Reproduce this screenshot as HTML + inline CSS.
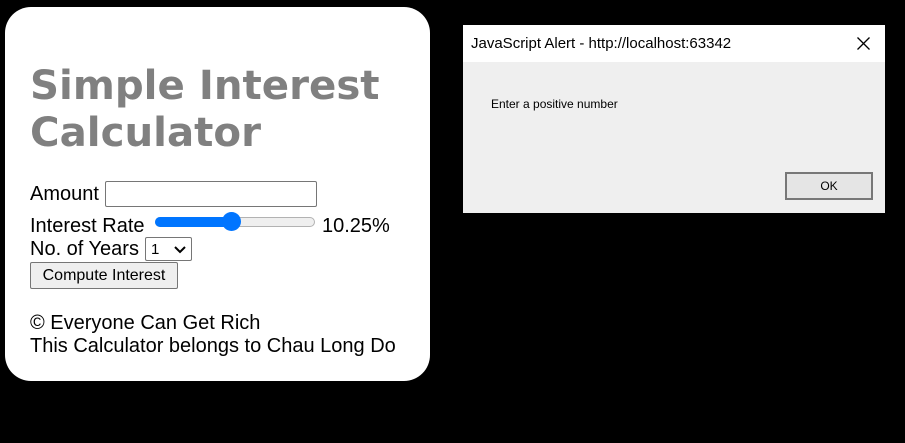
<!DOCTYPE html>
<html><head><style>
body{margin:0;width:905px;height:443px;background:#000;position:relative;overflow:hidden;font-family:"Liberation Sans",Arial,sans-serif;}
.card{position:absolute;left:5px;top:7px;width:425px;height:374px;background:#fff;border-radius:26px;}
.a{position:absolute;white-space:nowrap;}
h1{position:absolute;left:25px;top:55px;margin:0;font-family:"DejaVu Sans",Verdana,sans-serif;font-size:40.3px;line-height:47px;color:#808080;font-weight:bold;white-space:nowrap;}
.t{font-size:20px;color:#000;}
.dlg{position:absolute;left:463px;top:25px;width:422px;height:188px;background:#efefef;}
.tb{position:absolute;left:0;top:0;width:422px;height:37px;background:#fff;}
</style></head><body>
<div class="card">
<h1>Simple Interest<br>Calculator</h1>
<div class="a t" style="left:25px;top:176px;">Amount</div>
<div class="a" style="left:100px;top:174px;width:210px;height:24px;border:1px solid #767676;border-radius:2px;"></div>
<div class="a t" style="left:25px;top:208px;">Interest Rate</div>
<div class="a" style="left:150px;top:210px;width:158px;height:8px;border:1px solid #b2b2b2;border-radius:5px;background:#efefef;"></div>
<div class="a" style="left:150px;top:210px;width:80px;height:10px;border-radius:5px;background:#0075ff;"></div>
<div class="a" style="left:217px;top:205px;width:19px;height:19px;border-radius:50%;background:#0075ff;"></div>
<div class="a t" style="left:317px;top:208px;">10.25%</div>
<div class="a t" style="left:25px;top:231px;">No. of Years</div>
<div class="a" style="left:140px;top:230px;width:45px;height:22px;border:1px solid #767676;border-radius:2px;font-size:15px;">
<span style="position:absolute;left:5px;top:3px;">1</span>
<svg style="position:absolute;left:28px;top:8px" width="12" height="8"><path d="M1 1l5 5 5-5" stroke="#000" stroke-width="2" fill="none"/></svg></div>
<div class="a" style="left:25px;top:255px;width:146px;height:25px;border:1px solid #767676;border-radius:2px;background:#efefef;font-size:16px;text-align:center;line-height:25px;">Compute Interest</div>
<div class="a t" style="left:25px;top:305px;">© Everyone Can Get Rich</div>
<div class="a t" style="left:25px;top:328px;">This Calculator belongs to Chau Long Do</div>
</div>
<div class="dlg">
<div class="tb"><span class="a" style="left:8px;top:10px;font-size:15px;color:#000;">JavaScript Alert - http://localhost:63342</span>
<svg class="a" style="left:394px;top:12px" width="13" height="13"><path d="M0.5 0.5l12 12M12.5 0.5l-12 12" stroke="#000" stroke-width="1.3"/></svg></div>
<div class="a" style="left:28px;top:72px;font-size:12px;">Enter a positive number</div>
<div class="a" style="left:322px;top:147px;width:84px;height:24px;border:2px solid #777;background:#e5e5e5;font-size:12px;text-align:center;line-height:24px;">OK</div>
</div>
</body></html>
